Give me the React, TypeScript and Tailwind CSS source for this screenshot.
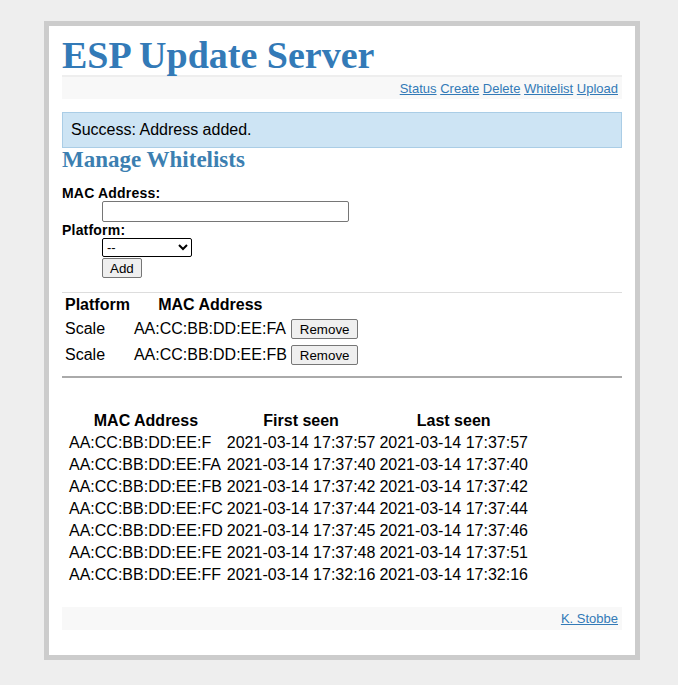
const seen = [
  ['AA:CC:BB:DD:EE:F', '2021-03-14 17:37:57', '2021-03-14 17:37:57'],
  ['AA:CC:BB:DD:EE:FA', '2021-03-14 17:37:40', '2021-03-14 17:37:40'],
  ['AA:CC:BB:DD:EE:FB', '2021-03-14 17:37:42', '2021-03-14 17:37:42'],
  ['AA:CC:BB:DD:EE:FC', '2021-03-14 17:37:44', '2021-03-14 17:37:44'],
  ['AA:CC:BB:DD:EE:FD', '2021-03-14 17:37:45', '2021-03-14 17:37:46'],
  ['AA:CC:BB:DD:EE:FE', '2021-03-14 17:37:48', '2021-03-14 17:37:51'],
  ['AA:CC:BB:DD:EE:FF', '2021-03-14 17:32:16', '2021-03-14 17:32:16'],
];

const whitelist = [
  { platform: 'Scale', mac: 'AA:CC:BB:DD:EE:FA' },
  { platform: 'Scale', mac: 'AA:CC:BB:DD:EE:FB' },
];

export default function App() {
  return (
    <div className="min-h-[685px] bg-[#eeeeee] pt-[21px] font-['Liberation_Sans',Arial,sans-serif] text-[16px] leading-[normal] text-black">
      <div className="ml-[44px] w-[596px] border-[5px] border-[#cccccc] bg-white px-[13px] pb-[25px]">
        {/* Header */}
        <h1 className="mt-[10px] h-[38px] font-['Liberation_Serif',Georgia,serif] text-[38px] font-bold leading-[38px] text-[#337ab7]">
          ESP Update Server
        </h1>
        <nav className="mt-[1px] flex h-[24px] items-center justify-end border-t-2 border-[#eeeeee] bg-[#f8f8f8] pr-[4px] text-[13px] text-[#337ab7]">
          <a href="#" className="underline">Status</a>&nbsp;
          <a href="#" className="underline">Create</a>&nbsp;
          <a href="#" className="underline">Delete</a>&nbsp;
          <a href="#" className="underline">Whitelist</a>&nbsp;
          <a href="#" className="underline">Upload</a>
        </nav>

        {/* Alert */}
        <div className="mt-[13px] flex h-[36px] items-center border border-[#aacde6] bg-[#cde4f4] px-[8px]">
          Success: Address added.
        </div>

        <h2 className="mt-[1px] font-['Liberation_Serif',Georgia,serif] text-[23px] font-bold leading-[22px] text-[#3c7fb1]">
          Manage Whitelists
        </h2>

        {/* Form */}
        <form className="mt-[14px] text-[14px]">
          <label className="block font-bold leading-[16px] tracking-[0.2px]">MAC Address:</label>
          <div className="pl-[40px]">
            <input type="text" className="block h-[21px] w-[247px] rounded-[2px] border border-[#767676] bg-white px-1" />
          </div>
          <label className="block font-bold leading-[16px] tracking-[0.2px]">Platform:</label>
          <div className="pl-[40px]">
            <select className="block h-[19px] w-[90px] rounded-[2px] border border-black bg-white text-[13px]">
              <option>--</option>
              <option>Scale</option>
            </select>
            <button type="button" className="mt-[1px] block h-[20px] rounded-[2px] border border-[#767676] bg-[#efefef] px-[7px] text-[13.33px]">
              Add
            </button>
          </div>
        </form>

        <hr className="mt-[14px] border-t border-[#dddddd]" />

        <table className="border-separate border-spacing-[2px]">
          <thead>
            <tr>
              <th className="px-[1px] py-[1px] font-bold">Platform</th>
              <th className="px-[1px] py-[1px] font-bold">MAC Address</th>
              <th></th>
            </tr>
          </thead>
          <tbody>
            {whitelist.map((w) => (
              <tr key={w.mac}>
                <td className="px-[1px] py-[2px]">{w.platform}</td>
                <td className="px-[1px] py-[2px]">{w.mac}</td>
                <td className="px-[1px] py-[2px]">
                  <button type="button" className="block h-[20px] rounded-[2px] border border-[#767676] bg-[#efefef] px-[8px] text-[13.33px]">
                    Remove
                  </button>
                </td>
              </tr>
            ))}
          </tbody>
        </table>

        <hr className="mt-[7px] border-t-2 border-[#aaaaaa]" />

        <table className="ml-[4px] mt-[31px] border-separate border-spacing-[2px]">
          <thead>
            <tr>
              <th className="px-[1px] py-[1px] font-bold">MAC Address</th>
              <th className="px-[1px] py-[1px] font-bold">First seen</th>
              <th className="px-[1px] py-[1px] font-bold">Last seen</th>
            </tr>
          </thead>
          <tbody>
            {seen.map((r) => (
              <tr key={r[0]}>
                <td className="px-[1px] py-[1px]">{r[0]}</td>
                <td className="px-[1px] py-[1px]">{r[1]}</td>
                <td className="px-[1px] py-[1px]">{r[2]}</td>
              </tr>
            ))}
          </tbody>
        </table>

        {/* Footer */}
        <footer className="mt-[20px] flex h-[23px] items-center justify-end bg-[#f8f8f8] pr-[4px] text-[13px]">
          <a href="#" className="text-[#337ab7] underline">K. Stobbe</a>
        </footer>
      </div>
    </div>
  );
}
